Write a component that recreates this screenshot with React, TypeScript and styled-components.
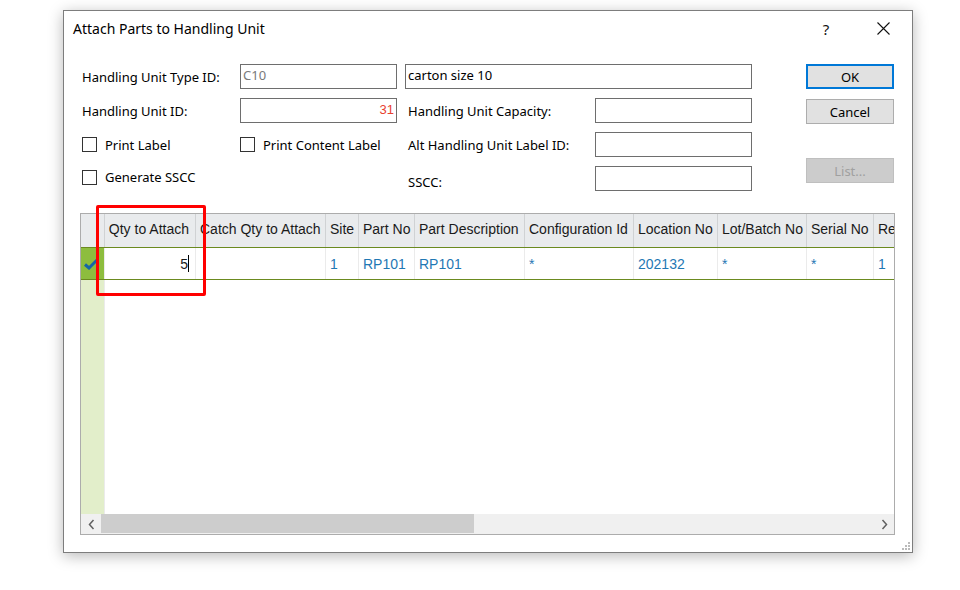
import React from "react";
import styled, { createGlobalStyle } from "styled-components";

const Global = createGlobalStyle`
  * { box-sizing: border-box; }
  html, body { margin: 0; padding: 0; background: #fff; }
  body { font-family: "Noto Sans", "Liberation Sans", sans-serif; }
  svg { display: block; }
`;

const Page = styled.div`
  width: 960px;
  height: 590px;
  padding: 10px 0 0 63px;
  background: #fff;
`;

const Dialog = styled.div`
  width: 850px;
  height: 543px;
  border: 1px solid #7d7d7d;
  background: #fff;
  box-shadow: 0 3px 14px rgba(0, 0, 0, 0.28);
  display: flex;
  flex-direction: column;
  position: relative;
`;

const TitleBar = styled.div`
  height: 40px;
  display: flex;
  align-items: center;
  padding: 0 0 5px 9px;
  flex-shrink: 0;
`;

const Title = styled.div`
  flex: 1;
  font-size: 14px;
  color: #000;
`;

const TitleButton = styled.div<{ $w: number }>`
  width: ${(p) => p.$w}px;
  height: 34px;
  display: flex;
  align-items: center;
  justify-content: center;
  font-size: 15px;
  color: #111;
`;

const Body = styled.div`
  flex: 1;
  display: flex;
  flex-direction: column;
  padding: 13px 17px 16px 16px;
`;

const Top = styled.div`
  display: flex;
  padding-left: 2px;
`;

const Form = styled.div`
  display: grid;
  grid-template-columns: 158px 157px 8px 190px 157px;
  grid-template-rows: repeat(4, 25px);
  row-gap: 9px;
  align-items: center;
`;

const Label = styled.div<{ $col: number; $pad?: number; $drop?: number }>`
  grid-column: ${(p) => p.$col};
  font-size: 13px;
  color: #000;
  padding-left: ${(p) => p.$pad ?? 0}px;
  padding-top: ${(p) => p.$drop ?? 0}px;
  white-space: nowrap;
`;

const Input = styled.div<{ $col: string; $color?: string; $align?: string }>`
  grid-column: ${(p) => p.$col};
  height: 25px;
  border: 1px solid #6e6e6e;
  background: #fff;
  font-size: 13px;
  line-height: 21px;
  padding: 0 2px;
  color: ${(p) => p.$color ?? "#000"};
  text-align: ${(p) => p.$align ?? "left"};
  font-family: ${(p) => (p.$align === "right" ? `"Liberation Sans", Arial, sans-serif` : `inherit`)};
`;

const Check = styled.label<{ $col: number; $up?: number }>`
  grid-column: ${(p) => p.$col};
  display: flex;
  align-items: center;
  gap: 8px;
  font-size: 13px;
  white-space: nowrap;
  margin-top: ${(p) => -(p.$up ?? 0)}px;
`;

const Box = styled.span`
  width: 15px;
  height: 15px;
  border: 1px solid #333;
  background: #fff;
  flex-shrink: 0;
`;

const Buttons = styled.div`
  margin-left: 54px;
  display: flex;
  flex-direction: column;
  width: 88px;
`;

const Button = styled.div<{ $variant?: "default" | "disabled" | "normal"; $mt?: number }>`
  height: 25px;
  margin-top: ${(p) => p.$mt ?? 0}px;
  display: flex;
  align-items: center;
  justify-content: center;
  font-size: 13px;
  background: ${(p) => (p.$variant === "disabled" ? "#cccccc" : "#e1e1e1")};
  color: ${(p) => (p.$variant === "disabled" ? "#a0a0a0" : "#000")};
  border: ${(p) =>
    p.$variant === "default" ? "2px solid #0078d7" : p.$variant === "disabled" ? "1px solid #bfbfbf" : "1px solid #adadad"};
`;

const GridWrap = styled.div`
  position: relative;
  margin-top: 22px;
  height: 322px;
  border: 1px solid #acacac;
  display: flex;
  flex-direction: column;
`;

const GridScroll = styled.div`
  flex: 1;
  overflow: hidden;
  position: relative;
  display: flex;
  flex-direction: column;
`;

const Row = styled.div<{ $head?: boolean }>`
  display: flex;
  height: ${(p) => (p.$head ? 34 : 32)}px;
  flex-shrink: 0;
  background: ${(p) => (p.$head ? "#e9ebed" : "#fff")};
  border-bottom: 1px solid #6b8a1f;
`;

const Cell = styled.div<{ $w: number; $head?: boolean; $align?: string; $ind?: boolean }>`
  width: ${(p) => p.$w}px;
  flex-shrink: 0;
  display: flex;
  align-items: center;
  justify-content: ${(p) => (p.$align === "right" ? "flex-end" : "flex-start")};
  padding: ${(p) => (p.$align === "right" ? "0 6px 0 4px" : "0 3px 0 4px")};
  border-right: 1px solid ${(p) => (p.$head ? "#d0d2d4" : "#ebebeb")};
  font-family: "Liberation Sans", Arial, sans-serif;
  font-size: 14px;
  color: ${(p) => (p.$head || p.$align === "right" ? "#1a1a1a" : "#1f78b4")};
  white-space: nowrap;
  overflow: hidden;
  background: ${(p) => (p.$ind ? "#8dbd3e" : "transparent")};
  padding-bottom: ${(p) => (p.$head ? 4 : 0)}px;
`;

const Caret = styled.span`
  display: inline-block;
  width: 1px;
  height: 17px;
  background: #000;
`;

const Filler = styled.div`
  flex: 1;
  display: flex;
`;

const IndicatorStrip = styled.div`
  width: 24px;
  background: #e2eeca;
  border-right: 1px solid #ebebeb;
`;

const ScrollBar = styled.div`
  height: 20px;
  flex-shrink: 0;
  background: #f0f0f0;
  display: flex;
  align-items: stretch;
`;

const ScrollArrow = styled.div`
  width: 20px;
  display: flex;
  align-items: center;
  justify-content: center;
`;

const Thumb = styled.div`
  width: 373px;
  background: #cdcdcd;
  margin: 0 0 1px 0;
`;

const ScrollTrack = styled.div`
  flex: 1;
  display: flex;
`;

const Highlight = styled.div`
  position: absolute;
  left: 15px;
  top: -9px;
  width: 110px;
  height: 91px;
  border: 3px solid #ff0000;
  border-radius: 2px;
  pointer-events: none;
`;

const Grip = styled.div`
  position: absolute;
  right: 2px;
  bottom: 2px;
  width: 8px;
  height: 8px;
`;

const columns: { title: string; w: number; value: string; align?: string }[] = [
  { title: "Qty to Attach", w: 91, value: "5", align: "right" },
  { title: "Catch Qty to Attach", w: 130, value: "" },
  { title: "Site", w: 33, value: "1" },
  { title: "Part No", w: 56, value: "RP101" },
  { title: "Part Description", w: 110, value: "RP101" },
  { title: "Configuration Id", w: 109, value: "*" },
  { title: "Location No", w: 84, value: "202132" },
  { title: "Lot/Batch No", w: 89, value: "*" },
  { title: "Serial No", w: 67, value: "*" },
  { title: "Re", w: 40, value: "1" },
];

const CheckMark = () => (
  <svg width="15" height="13" viewBox="0 0 15 13">
    <path d="M1 7.5 L5 11 L14 2" fill="none" stroke="#1565a8" strokeWidth="3" strokeLinejoin="miter" />
  </svg>
);

export default function App() {
  return (
    <Page>
      <Global />
      <Dialog>
        <TitleBar>
          <Title>Attach Parts to Handling Unit</Title>
          <TitleButton $w={56}>?</TitleButton>
          <TitleButton $w={58}>
            <svg width="13" height="13" viewBox="0 0 13 13">
              <path d="M0.5 0.5 L12.5 12.5 M12.5 0.5 L0.5 12.5" stroke="#111" strokeWidth="1.1" />
            </svg>
          </TitleButton>
        </TitleBar>
        <Body>
          <Top>
            <Form>
              <Label $col={1}>Handling Unit Type ID:</Label>
              <Input $col="2" $color="#7a7a7a">C10</Input>
              <Input $col="4 / 6">carton size 10</Input>

              <Label $col={1}>Handling Unit ID:</Label>
              <Input $col="2" $color="#e8412f" $align="right">31</Input>
              <Label $col={4} $pad={3}>Handling Unit Capacity:</Label>
              <Input $col="5" />

              <Check $col={1}><Box />Print Label</Check>
              <Check $col={2}><Box />Print Content Label</Check>
              <Label $col={4} $pad={3}>Alt Handling Unit Label ID:</Label>
              <Input $col="5" />

              <Check $col={1} $up={3}><Box />Generate SSCC</Check>
              <Label $col={4} $pad={3} $drop={6}>SSCC:</Label>
              <Input $col="5" />
            </Form>
            <Buttons>
              <Button $variant="default">OK</Button>
              <Button $variant="normal" $mt={10}>Cancel</Button>
              <Button $variant="disabled" $mt={34}>List...</Button>
            </Buttons>
          </Top>
          <GridWrap>
            <GridScroll>
              <Row $head>
                <Cell $w={24} $head />
                {columns.map((c) => (
                  <Cell key={c.title} $w={c.w} $head $align={c.align}>
                    {c.title}
                  </Cell>
                ))}
              </Row>
              <Row>
                <Cell $w={24} $ind style={{ padding: "0 0 0 3px" }}>
                  <CheckMark />
                </Cell>
                {columns.map((c) => (
                  <Cell key={c.title} $w={c.w} $align={c.align}>
                    {c.value}
                    {c.align === "right" && <Caret />}
                  </Cell>
                ))}
              </Row>
              <Filler>
                <IndicatorStrip />
              </Filler>
            </GridScroll>
            <ScrollBar>
              <ScrollArrow>
                <svg width="7" height="11" viewBox="0 0 7 11">
                  <path d="M5.5 1 L1.5 5.5 L5.5 10" fill="none" stroke="#606060" strokeWidth="1.5" />
                </svg>
              </ScrollArrow>
              <ScrollTrack>
                <Thumb />
              </ScrollTrack>
              <ScrollArrow>
                <svg width="7" height="11" viewBox="0 0 7 11">
                  <path d="M1.5 1 L5.5 5.5 L1.5 10" fill="none" stroke="#606060" strokeWidth="1.5" />
                </svg>
              </ScrollArrow>
            </ScrollBar>
            <Highlight />
          </GridWrap>
        </Body>
        <Grip>
          <svg width="8" height="8" viewBox="0 0 8 8">
            <rect x="6" y="0" width="2" height="2" fill="#bbb" />
            <rect x="3" y="3" width="2" height="2" fill="#bbb" />
            <rect x="6" y="3" width="2" height="2" fill="#bbb" />
            <rect x="0" y="6" width="2" height="2" fill="#bbb" />
            <rect x="3" y="6" width="2" height="2" fill="#bbb" />
            <rect x="6" y="6" width="2" height="2" fill="#bbb" />
          </svg>
        </Grip>
      </Dialog>
    </Page>
  );
}
